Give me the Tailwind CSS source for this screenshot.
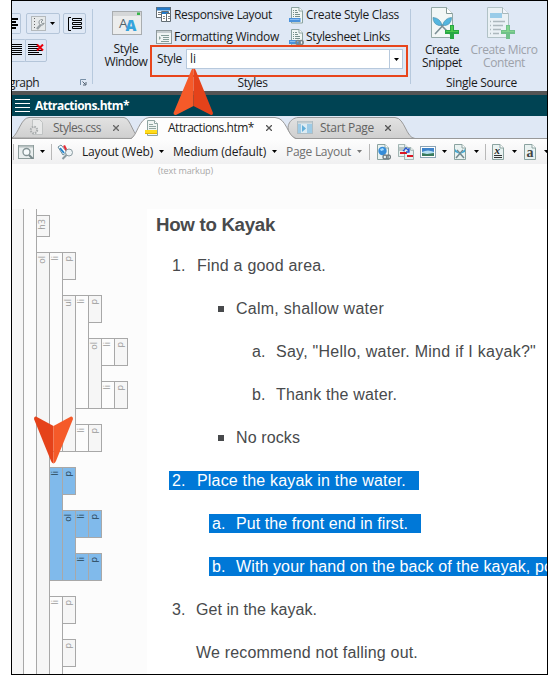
<!DOCTYPE html>
<html lang="en">
<head>
<meta charset="utf-8">
<title>Attractions.htm</title>
<script src="https://cdn.jsdelivr.net/npm/@tailwindcss/browser@4"></script>
</head>
<body class="bg-white">
<svg class="absolute h-0 w-0">
  <defs>
    <linearGradient id="tabg" x1="0" y1="0" x2="0" y2="1"><stop offset="0" stop-color="#e2e2e2"/><stop offset="1" stop-color="#cfcfcf"/></linearGradient>
    <symbol id="page" viewBox="0 0 12 16"><path d="M.5.5h7.500l3.500 3.500v11.500h-11z" fill="#e9f2f1" stroke="#8ba3a0"/><path d="M8 .5v3.500h3.500" fill="#fff" stroke="#8ba3a0"/></symbol>
    <symbol id="plus" viewBox="0 0 14 14"><path d="M5 0h4v5h5v4H9v5H5V9H0V5h5z" fill="#27a844"/><path d="M6 1h2v5h5v1H1V6h5z" fill="#4bc84b"/></symbol>
    <symbol id="sheet" viewBox="0 0 15 17"><path d="M2.500.5h7.500l3.500 3.500v12h-11z" fill="#f0f6f4" stroke="#8ba3a0"/><path d="M10 .5v3.500h3.500" fill="#fff" stroke="#8ba3a0"/><path d="M4 3.500h1m1 0h2M4 5.500h1m1 0h3M4 7.500h1m1 0h5M4 9.500h1m1 0h5" stroke="#78908c"/><rect y="11" width="11.500" height="4" fill="#4a92dc"/><path d="M1 12.500h9.500" stroke="#8abcf0"/></symbol>
  </defs>
</svg>
<div data-font='12px "Open Sans"' class="relative ml-[11px] h-[675px] w-[537px] overflow-hidden border border-black bg-[#fcfcfc] font-['Open_Sans','Noto_Sans',sans-serif] text-[12px] text-[#1a1a1a] flex flex-col">

  <!-- Ribbon -->
  <header class="flex h-[90px] shrink-0 bg-[#dfe8f5]">
    <section class="flex w-[80px] shrink-0 flex-col pt-[12px]">
      <div class="flex h-[21px]">
        <div class="flex w-[9px] items-center rounded-r-[2px] border border-l-0 border-[#b4c5d9]"><svg width="8" height="12"><path d="M0 1h6M0 4h4M0 7h6M0 10h4" stroke="#000" stroke-width="2"/></svg></div>
        <div class="ml-[5px] flex w-[34px] items-center justify-center gap-[3px] rounded-[2px] border border-[#b4c5d9]">
          <svg width="16" height="16" fill="none"><rect x=".5" y=".5" width="14" height="14" fill="#e6e9ea" stroke="#b4b9bc"/><path d="M3.500 2v12" stroke="#666" stroke-dasharray="1 2"/><path d="M6 13l4-4.500" stroke="#9aa2a6" stroke-width="2.500"/><path d="M12 4a2.700 2.700 0 1 0 1.200 3.200l-2 .5-1.200-1.700z" fill="#f4f6f7" stroke="#8a9296"/></svg>
          <svg width="5" height="3"><path d="M0 0h5L2.500 3z" fill="#000"/></svg>
        </div>
        <div class="ml-[3px] flex w-[23px] items-center justify-center rounded-[2px] border border-[#b4c5d9]"><svg width="16" height="14" fill="none" stroke="#000"><path d="M4 .5H1.500v13H4"/><path d="M5.500 1.500h9v2h-9zM5.500 5.500h9v2h-9zM5.500 9.500h9v2h-9z"/></svg></div>
      </div>
      <div class="mt-[5px] flex h-[23px]">
        <div class="flex w-[14px] items-center rounded-r-[2px] border border-l-0 border-[#b4c5d9]"><svg width="11" height="13"><path d="M0 .5h10M0 2.500h10M0 4.500h10M0 6.500h10M0 8.500h10M0 10.500h10" stroke="#000"/></svg></div>
        <div class="-ml-px flex w-[22px] items-center justify-center rounded-r-[2px] border border-[#b4c5d9]"><svg width="17" height="13"><path d="M0 .5h10M0 2.500h10M0 4.500h10M0 6.500h14M0 8.500h11M0 10.500h14" stroke="#000"/><path d="M9 .5l6 6M15 .5l-6 6" stroke="#e8000c" stroke-width="2"/></svg></div>
      </div>
      <div class="mt-[12px] flex h-[17px] items-center justify-between pr-[5px]">
        <span class="-ml-[3px] leading-[17px]" data-fit="30">graph</span>
        <svg width="7" height="7" fill="none" stroke="#7890a8"><path d="M.5 6V.5H6"/><path d="M2.500 2.500l3 3M6 3v3H3" stroke="#506070"/></svg>
      </div>
    </section>
    <div class="mt-[8px] h-[75px] w-px shrink-0 bg-[#b7c9dd]"></div>

    <section class="flex w-[57px] shrink-0 flex-col items-center pl-[11px] pt-[10px]">
      <svg class="shrink-0" width="30" height="24"><rect x=".5" y=".5" width="29" height="23" fill="#eceded" stroke="#a9adb0"/><rect x="1" y="1" width="28" height="4" fill="#d5d7d8"/><rect x="25" y="1.500" width="3" height="2.500" fill="#38b44a"/><text x="7" y="17" font-family="Open Sans" font-size="13.500" fill="#51646d">A</text><text x="13.500" y="19.500" font-family="Open Sans" font-weight="800" font-size="15" fill="#35a3dc">A</text></svg>
      <div class="-ml-[2px] mt-[7px] flex flex-col items-center leading-[13px]"><span data-fit="25">Style</span><span data-fit="43">Window</span></div>
    </section>

    <section class="flex w-[260px] shrink-0 flex-col">
      <div class="flex h-[44px] pl-[6px] pt-[3px]">
        <div class="w-[133px]">
          <div class="flex h-[22px] items-center"><svg width="16" height="16"><rect x=".5" y=".5" width="14" height="10" fill="#fff" stroke="#666f75"/><path d="M1 2h13" stroke="#2479c8" stroke-width="3"/><path d="M2 5.500h3M2 7.500h3" stroke="#777"/><path d="M5.500 4.500h7v10h-7z" fill="#fff" stroke="#626c72"/><path d="M6 6h6" stroke="#2479c8" stroke-width="2"/><path d="M10.500 6.500h4v8h-4z" fill="#fff" stroke="#626c72"/><path d="M7 9.500h2M7 11.500h2M12 9.500h2M12 11.500h2" stroke="#888"/></svg><span class="ml-[2px]" data-fit="98">Responsive Layout</span></div>
          <div class="flex h-[22px] items-center"><svg width="16" height="14"><rect x=".5" y=".5" width="15" height="13" fill="#f0f4f3" stroke="#8e999b"/><path d="M1 2h14" stroke="#c5cccf" stroke-width="2"/><path d="M5 5.500h8M7 7.500h6M7 9.500h6M5 11.500h8" stroke="#839b97"/><path d="M3 6l2 2-2 2z" fill="#8ca39f"/></svg><span class="ml-[2px]" data-fit="105">Formatting Window</span></div>
        </div>
        <div>
          <div class="flex h-[22px] items-center"><svg width="15" height="17"><use href="#sheet" width="15" height="17"/></svg><span class="ml-[2px]" data-fit="93">Create Style Class</span></div>
          <div class="flex h-[22px] items-center"><svg width="15" height="17"><use href="#sheet" width="15" height="17"/><g fill="none" stroke="#7c8589" stroke-width="1.500"><circle cx="9" cy="13.500" r="2"/><circle cx="12.200" cy="13.500" r="2"/></g></svg><span class="ml-[2px]" data-fit="84">Stylesheet Links</span></div>
        </div>
      </div>
      <div class="flex h-[32px] w-[258px] items-start border-2 border-[#e8451c] pl-[5px] pt-[2px]">
        <span class="mt-[1px] w-[29px] leading-[17px]" data-fit="25">Style</span>
        <div class="flex h-[20px] w-[217px] items-center justify-between border border-[#b7c9dd] bg-white pl-[3px]"><span data-fit="6">li</span><span class="flex h-full w-[13px] items-center justify-center border-l border-[#b7c9dd]"><svg width="5" height="3"><path d="M0 0h5L2.500 3z" fill="#000"/></svg></span></div>
      </div>
      <div class="flex h-[12px] items-center justify-center pr-[55px]"><span class="leading-[12px]" data-fit="30">Styles</span></div>
    </section>
    <div class="mt-[8px] h-[75px] w-px shrink-0 bg-[#b7c9dd]"></div>

    <section class="flex w-[136px] shrink-0 flex-col">
      <div class="flex h-[74px] pt-[6px]">
        <div class="flex w-[62px] flex-col items-center">
          <svg class="ml-[6px] shrink-0" width="28" height="32"><path d="M.5.5h15l6 6v24H.5z" fill="#f2f7f6" stroke="#93a9a7"/><path d="M15.500.5v6h6" fill="#fff" stroke="#829996"/><path d="M4 27L16 14M19 27L6 14" stroke="#7c9096" stroke-width="1.600"/><path d="M11 18Q9 11 2 10.500Q2 17 8 18.500zM11.500 18Q14 11 20.500 10.500Q20.500 17 14.500 18.500z" fill="#54b6df" stroke="#4b91ae" stroke-width=".7"/><use href="#plus" x="14" y="18" width="14" height="14"/></svg>
          <div class="mt-[4px] flex flex-col items-center leading-[13px]"><span data-fit="34">Create</span><span data-fit="40">Snippet</span></div>
        </div>
        <div class="flex w-[62px] flex-col items-center text-[#9da2aa]">
          <svg class="-ml-[7px] shrink-0" width="28" height="32" opacity=".6"><path d="M.5.5h15l6 6v24H.5z" fill="#f2f7f6" stroke="#93a9a7"/><path d="M15.500.5v6h6" fill="#fff" stroke="#829996"/><rect x="3" y="6" width="12" height="5" fill="#6bbbe0"/><path d="M3 14.500h1m2 0h12M3 18.500h1m2 0h10M3 22.500h1m2 0h8M3 26.500h1m2 0h6" stroke="#8b9999" stroke-width="1.500"/><use href="#plus" x="14" y="18" width="14" height="14"/></svg>
          <div class="mt-[4px] flex flex-col items-center leading-[13px]"><span data-fit="67">Create Micro</span><span data-fit="42">Content</span></div>
        </div>
      </div>
      <div class="flex h-[16px] items-center pl-[35px]"><span class="leading-[16px]" data-fit="71">Single Source</span></div>
    </section>
  </header>
  <div class="h-[4px] shrink-0 bg-[#545454]"></div>

  <!-- Document title -->
  <div class="flex h-[21px] shrink-0 items-center bg-[#004353] pl-[3px] text-white" data-font='bold 12px "Open Sans"'>
    <svg width="15" height="13" stroke="#fff"><path d="M0 .5h15M0 4.500h15M0 8.500h15M0 12.500h15"/></svg>
    <span class="ml-[5px] font-bold" data-fit="94">Attractions.htm*</span>
  </div>

  <!-- File tabs -->
  <nav class="relative isolate flex h-[23px] shrink-0 items-center bg-[#dfe8f5] text-[#626262]">
    <svg class="absolute left-0 top-0 -z-10" width="535" height="23" stroke="#999">
      <path d="M0 22.500h535"/>
      <path d="M0 22C7 17 9 2 17 1.500H112C119 2 121 22 130 22.500z" fill="url(#tabg)"/>
      <path d="M281 22.500C271 12 278 2 286 1.500H383C393 2 394 22 403 22.500z" fill="url(#tabg)"/>
      <path d="M119 23C125 20 127 2 137 1.500H263C275 2 275 20 284 23z" fill="#fdfdfd" stroke="none"/>
      <path d="M119 22.500C125 20 127 2 137 1.500H263C275 2 275 20 284 22.500" fill="none"/>
    </svg>
    <div class="flex w-[121px] shrink-0 items-center pl-[17px]">
      <svg width="15" height="17"><path d="M3.500.5h7l3 3v12h-10z" fill="#e8e9e9" stroke="#c0c3c3"/><circle cx="5" cy="11" r="3.200" fill="#ddd" stroke="#a8acad" stroke-width="2" stroke-dasharray="1.500 1"/></svg>
      <span class="ml-[9px]" data-fit="48">Styles.css</span>
      <svg class="ml-[12px]" width="6" height="6" stroke="#666" stroke-width="1.300"><path d="M0 0l6 6M6 0L0 6"/></svg>
    </div>
    <div class="flex w-[156px] shrink-0 items-center pl-[12px] text-[#222]">
      <svg width="14" height="16"><path d="M2.500.5h7l3 3v12h-10z" fill="#f0f5f3" stroke="#8fa5a2"/><path d="M9.500.5v3h3" fill="#fff" stroke="#8fa5a2"/><path d="M4 4.500h4M4 6.500h7M4 8.500h7" stroke="#91a6a2"/><path d="M0 10h12v4H0z" fill="#ffdc1c"/><path d="M0 13.500h12" stroke="#e5b700"/></svg>
      <span class="ml-[9px]" data-fit="86">Attractions.htm*</span>
      <svg class="ml-[12px]" width="6" height="6" stroke="#555" stroke-width="1.300"><path d="M0 0l6 6M6 0L0 6"/></svg>
    </div>
    <div class="flex items-center pl-[8px]">
      <svg width="16" height="13"><rect x=".5" y=".5" width="15" height="12" fill="#dcebf3" stroke="#b0bdc3"/><path d="M1 1.500h14" stroke="#c3ccd0" stroke-width="2"/><path d="M1 3h3v9H1zM10 3h5v9h-5z" fill="#9ecbe6"/><path d="M5 4l4 3.500L5 11z" fill="#64afd9"/></svg>
      <span class="ml-[7px]" data-fit="54">Start Page</span>
      <svg class="ml-[11px]" width="6" height="6" stroke="#555" stroke-width="1.300"><path d="M0 0l6 6M6 0L0 6"/></svg>
    </div>
  </nav>

  <!-- Editor toolbar -->
  <div class="flex h-[25px] shrink-0 items-center bg-linear-to-b from-[#fdfdfd] to-[#f0f0f1] text-[#1a1a1a]">
    <i class="ml-px h-[16px] w-px shrink-0 bg-[#b8b8b8]"></i>
    <svg class="ml-[4px] shrink-0" width="16" height="14"><rect x=".5" y=".5" width="15" height="13" fill="#e9eeee" stroke="#8d9c9b"/><path d="M1 1.500h14" stroke="#b6c0c0" stroke-width="2"/><circle cx="8.500" cy="7" r="3.500" fill="#f7fbfc" stroke="#829193" stroke-width="1.300"/><path d="M11 10l4 4" stroke="#78888b" stroke-width="2"/></svg>
    <svg class="ml-[6px] shrink-0" width="5" height="3"><path d="M0 0h5L2.500 3z"/></svg>
    <i class="ml-[6px] h-[16px] w-px shrink-0 bg-[#b8b8b8]"></i>
    <svg class="ml-[5px] shrink-0" width="17" height="16"><path d="M1 3l3-2 6 7-4 3z" fill="#fff" stroke="#6b8d9a"/><path d="M6 2l2-1 2 4 1 3-2-.5z" fill="#e52b36"/><path d="M3 4l4 5" stroke="#2585cb" stroke-width="2"/><circle cx="12" cy="8.500" r="3.500" fill="#edf3f5" stroke="#8a9aa0"/><path d="M9.500 11l-4 4" stroke="#8a9aa0" stroke-width="2"/></svg>
    <span class="ml-[8px]" data-fit="71">Layout (Web)</span>
    <svg class="ml-[6px] shrink-0" width="5" height="3"><path d="M0 0h5L2.500 3z"/></svg>
    <span class="ml-[9px]" data-fit="93">Medium (default)</span>
    <svg class="ml-[6px] shrink-0" width="5" height="3"><path d="M0 0h5L2.500 3z"/></svg>
    <span class="ml-[9px] text-[#707070]" data-fit="65">Page Layout</span>
    <svg class="ml-[6px] shrink-0" width="5" height="3"><path d="M0 0h5L2.500 3z" fill="#777"/></svg>
    <i class="ml-[7px] h-[16px] w-px shrink-0 bg-[#b8b8b8]"></i>
    <svg class="ml-[7px] shrink-0" width="14" height="16"><use href="#page" width="12" height="16"/><circle cx="5.500" cy="7" r="4.200" fill="#358cd8"/><path d="M3 5l3-1 1 2-3 1z" fill="#a7ddff"/><circle cx="8" cy="13" r="2" fill="none" stroke="#737e82" stroke-width="1.300"/><circle cx="11.500" cy="13" r="2" fill="none" stroke="#737e82" stroke-width="1.300"/></svg>
    <svg class="ml-[7px] shrink-0" width="16" height="16"><use href="#page" width="10" height="13"/><use href="#page" x="6" y="3" width="10" height="13"/><path d="M1 4h5M1 6h4" stroke="#8d9d9c"/><path d="M2 9h7M9 12h6" stroke="#dc1723" stroke-width="2"/><path d="M5 7l3-3 3 3m0-3v4H8" fill="none" stroke="#2857cf" stroke-width="1.300"/></svg>
    <svg class="ml-[6px] shrink-0" width="16" height="12"><rect x=".5" y=".5" width="15" height="11" fill="#fff" stroke="#8ba3b4"/><path d="M2 2h12v5H2z" fill="#3e83ca"/><path d="M2 6q6-3 12 0v2H2z" fill="#b5dff2"/><path d="M2 7l5 1 7-1v3H2z" fill="#387b5d"/></svg>
    <svg class="ml-[6px] shrink-0" width="5" height="3"><path d="M0 0h5L2.500 3z"/></svg>
    <svg class="ml-[7px] shrink-0" width="12" height="16"><use href="#page" width="12" height="16"/><path d="M2 14l7-8M10 14L3 6" stroke="#74888d" stroke-width="1.500"/><path d="M6 10L1 8V5zM6 10l5-2V5z" fill="#41a8d4"/></svg>
    <svg class="ml-[8px] shrink-0" width="5" height="3"><path d="M0 0h5L2.500 3z"/></svg>
    <i class="ml-[6px] h-[16px] w-px shrink-0 bg-[#b8b8b8]"></i>
    <svg class="ml-[6px] shrink-0" width="12" height="16"><use href="#page" width="12" height="16"/><text x="2.500" y="9.500" font-family="Liberation Serif" font-style="italic" font-weight="bold" font-size="11" fill="#222">x</text><path d="M2 11.500h8M2 13.500h8" stroke="#333"/></svg>
    <svg class="ml-[8px] shrink-0" width="5" height="3"><path d="M0 0h5L2.500 3z"/></svg>
    <svg class="ml-[7px] shrink-0" width="12" height="16"><use href="#page" width="12" height="16"/><text x="2.500" y="13" font-family="Liberation Serif" font-weight="bold" font-size="14" fill="#444">a</text></svg>
    <svg class="ml-[8px] shrink-0" width="5" height="3"><path d="M0 0h5L2.500 3z"/></svg>
  </div>

  <div class="flex h-[45px] shrink-0 items-start pl-[146px] text-[9px] leading-[13px] text-[#a8a8a8]" data-font='9px "Open Sans"'><span data-fit="55">(text markup)</span></div>

  <!-- Structure bars and document -->
  <main class="flex h-[465px] shrink-0 overflow-hidden">
    <aside class="flex w-[135px] shrink-0 text-[9px] text-[#999]">
      <div class="w-[12px] shrink-0 border-r border-[#a8a8a8] bg-[#f6f6f6]"></div>
      <div class="w-[13px] shrink-0 border-r border-[#a8a8a8]"></div>
      <div id="tree" class="-ml-px flex flex-col items-start gap-[15px] pt-[6px]"></div>
    </aside>
    <article data-font='16px "Liberation Sans"' class="w-[400px] shrink-0 overflow-hidden bg-white pl-[9px] pt-[5px] font-['Liberation_Sans',Arial,sans-serif] text-[16px] leading-[19px] text-[#484a4c] whitespace-nowrap">
      <h3 class="mb-[20px] text-[18.700px] font-bold leading-[22px]" data-font='bold 18.7px "Liberation Sans"'><span data-fit="119">How to Kayak</span></h3>
      <div class="flex flex-col items-start gap-[24px]">
        <div class="flex pl-[16px]"><span class="w-[25px] shrink-0">1.</span><span data-fit="129">Find a good area.</span></div>
        <div class="flex items-center pl-[62px]"><i class="mr-[12px] h-[6px] w-[6px] bg-[#484a4c]"></i><span data-fit="148">Calm, shallow water</span></div>
        <div class="flex pl-[96px]"><span class="w-[24px] shrink-0">a.</span><span data-fit="260">Say, "Hello, water. Mind if I kayak?"</span></div>
        <div class="flex pl-[96px]"><span class="w-[24px] shrink-0">b.</span><span data-fit="121">Thank the water.</span></div>
        <div class="flex items-center pl-[62px]"><i class="mr-[12px] h-[6px] w-[6px] bg-[#484a4c]"></i><span data-fit="64">No rocks</span></div>
        <div class="ml-[13px] flex w-[250px] bg-[#0078d7] pl-[3px] text-white"><span class="w-[25px] shrink-0">2.</span><span data-fit="209">Place the kayak in the water.</span></div>
        <div class="ml-[53px] flex w-[212px] bg-[#0078d7] pl-[3px] text-white"><span class="w-[24px] shrink-0">a.</span><span data-fit="172">Put the front end in first.</span></div>
        <div class="ml-[53px] flex w-[338px] overflow-hidden bg-[#0078d7] pl-[3px] text-white"><span class="w-[24px] shrink-0">b.</span><span data-fit="317">With your hand on the back of the kayak, po</span></div>
        <div class="flex pl-[16px]"><span class="w-[24px] shrink-0">3.</span><span data-fit="121">Get in the kayak.</span></div>
        <div class="flex pl-[40px]"><span data-fit="222">We recommend not falling out.</span></div>
      </div>
    </article>
  </main>

  <!-- Callout arrows -->
  <svg class="absolute left-[161px] top-[67px]" width="42" height="49"><path d="M20.500 1Q19 0 18 3L.5 45Q.5 47.500 3 47L20.500 38z" fill="#f55a29"/><path d="M20.500 1Q22 0 23 3L40 45Q40 47.500 38 47L20.500 38z" fill="#e5421a"/></svg>
  <svg class="absolute left-[21px] top-[415px]" width="42" height="49"><path d="M20.500 47.500Q19 47 18 45L1 3Q1 0 3 .5L20.500 10z" fill="#e5421a"/><path d="M20.500 47.500Q22 47 23 45L40 3Q40 0 38 .5L20.500 10z" fill="#f55a29"/></svg>
</div>

<script>
const p = ['p'];
const tree = [
  ['h3'],
  ['ol',
    ['li', p, ['ul', ['li', p, ['ol', ['li', p], ['li', p]]], ['li', p]]],
    ['li*', p, ['ol', ['li', p], ['li', p]]],
    ['li+', p, p]]
];
function bar([name, ...kids], selected) {
  const sel = selected || name.endsWith('*');
  const tag = name.replace(/[*+]/, '');
  const row = document.createElement('div');
  row.className = 'flex';
  const strip = document.createElement('div');
  const shade = sel ? 'bg-[#80baeb] text-[#243f52]' : tag === 'li' ? 'bg-[#fcfcfc]' : 'bg-[#f6f6f6]';
  const height = tag === 'h3' ? 'h-[22px]' : name.endsWith('+') ? 'h-[100px]' : kids.length ? '' : 'h-[28px]';
  strip.className = 'w-[14px] shrink-0 border border-[#a8a8a8] pt-[3px] ' + shade + ' ' + height;
  const label = document.createElement('span');
  label.className = 'block rotate-180 [writing-mode:vertical-rl] leading-[12px] w-[12px] -ml-px';
  label.textContent = tag;
  strip.append(label);
  row.append(strip);
  if (kids.length) {
    const col = document.createElement('div');
    col.className = '-ml-px flex flex-col items-start gap-[15px]';
    kids.forEach(k => col.append(bar(k, sel)));
    row.append(col);
  }
  return row;
}
tree.forEach(n => document.getElementById('tree').append(bar(n, false)));

// Track each label so that it fills its nominal width.
const ctx = document.createElement('canvas').getContext('2d');
document.querySelectorAll('[data-fit]').forEach(el => {
  ctx.font = el.closest('[data-font]').dataset.font;
  const w = ctx.measureText(el.textContent).width;
  el.style.whiteSpace = 'nowrap';
  el.style.flexShrink = 0;
  el.style.letterSpacing = (el.dataset.fit - w) / el.textContent.length + 'px';
});
</script>
</body>
</html>
